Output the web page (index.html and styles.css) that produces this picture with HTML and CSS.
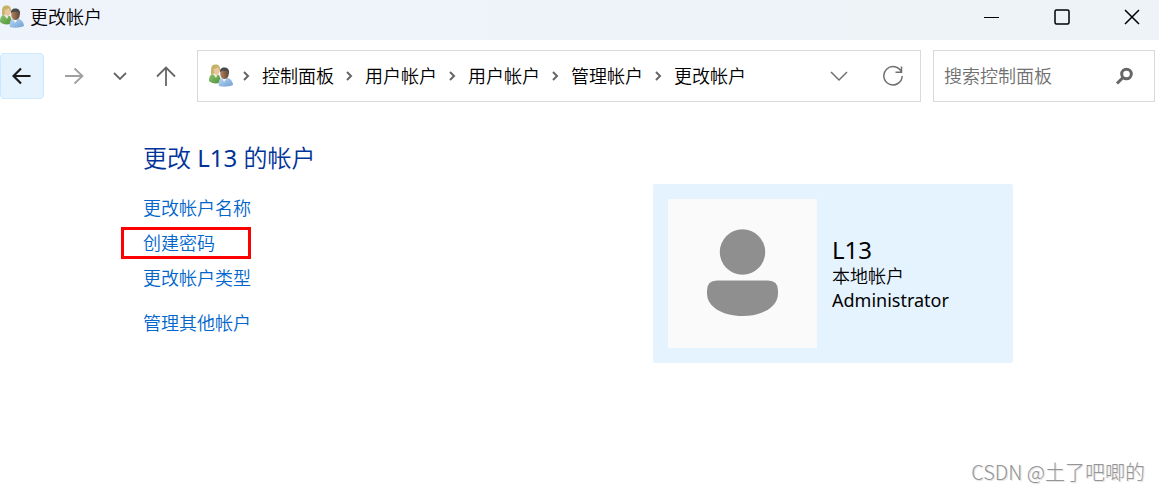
FILE: index.html
```html
<!DOCTYPE html>
<html lang="zh-CN">

<head>
    <meta charset="UTF-8">
    <meta name="viewport" content="width=device-width, initial-scale=1.0">
    <title>更改帐户</title>
    <link rel="stylesheet" href="styles.css">
</head>

<body>

    <!-- shared icon of two users -->
    <svg class="icon-defs" width="0" height="0" aria-hidden="true">
        <defs>
            <linearGradient id="green" x1="0" y1="0" x2="1" y2="1">
                <stop offset="0" stop-color="#8fc472" />
                <stop offset="1" stop-color="#4d9136" />
            </linearGradient>
            <linearGradient id="blue" x1="0" y1="0" x2="1" y2="1">
                <stop offset="0" stop-color="#b9d8f5" />
                <stop offset="1" stop-color="#6f9fd2" />
            </linearGradient>
            <linearGradient id="brown" x1="0" y1="0" x2="1" y2="0">
                <stop offset="0" stop-color="#b58460" />
                <stop offset="1" stop-color="#604636" />
            </linearGradient>
            <symbol id="users" viewBox="0 0 24 24">
                <path d="M0 17c0-4 1-6 3-7l7 1 2 5-2 3c-4 1-8 0-10-2z" fill="url(#green)" />
                <path d="M4 10l3 4 2-4z" fill="#f4ead8" />
                <path d="M2 9c0-5 0-8 4-8.500 4-.5 5 2 5 5.500l-1 3-8 1z" fill="#c5b268" />
                <path d="M4.500 5c2 0 3-1 4-2l2 3c0 3-1 5-3 5-2-1-3-3-3-6z" fill="#eac6a0" />
                <path d="M10 22c-1-4 0-7 3-8l6 0c3 1 5 4 5 7-4 2-11 2-14 1z" fill="url(#blue)" />
                <path d="M13 14l2 4 3-4z" fill="#edf6fd" />
                <ellipse cx="15.500" cy="9.500" rx="4.300" ry="5.500" fill="url(#brown)" />
                <path d="M11 8c0-3 1-4.500 4.500-4.500S20.500 6 20 10l-1.500-3c-3 0-5-1-7.500 1z" fill="#4a4a4c" />
            </symbol>
        </defs>
    </svg>

    <header class="titlebar">
        <svg class="app-icon" width="24" height="24" aria-hidden="true"><use href="#users" /></svg>
        <span class="titlebar-text">更改帐户</span>
        <div class="window-controls">
            <button class="window-btn" aria-label="最小化">
                <svg width="16" height="16" viewBox="0 0 16 16"><path d="M0 8.500H15" /></svg>
            </button>
            <button class="window-btn" aria-label="最大化">
                <svg width="16" height="16" viewBox="0 0 16 16"><rect class="thick" x="1" y="1" width="14" height="14" rx="1.500" /></svg>
            </button>
            <button class="window-btn" aria-label="关闭">
                <svg width="16" height="16" viewBox="0 0 16 16"><path class="thick" d="M1 1l14 14M15 1L1 15" /></svg>
            </button>
        </div>
    </header>

    <div class="toolbar">
        <nav class="nav-buttons">
            <button class="nav-btn back" aria-label="返回">
                <svg width="20" height="20" viewBox="0 0 20 20"><path d="M18.500 10H2M9 2.500L1.500 10 9 17.500" /></svg>
            </button>
            <button class="nav-btn forward" aria-label="前进">
                <svg width="20" height="20" viewBox="0 0 20 20"><path d="M1 10h17M10.500 2.500L18.500 10l-8 7.500" /></svg>
            </button>
            <button class="nav-btn recent" aria-label="最近浏览的位置">
                <svg width="14" height="14" viewBox="0 0 14 14"><path d="M1 4l6 6 6-6" /></svg>
            </button>
            <button class="nav-btn up" aria-label="上移">
                <svg width="20" height="20" viewBox="0 0 20 20"><path d="M10 20V1.500M1 10.500l9-9 9 9" /></svg>
            </button>
        </nav>

        <div class="address-bar">
            <svg class="address-icon" width="24" height="24" aria-hidden="true"><use href="#users" /></svg>
            <ol class="breadcrumb">
                <li><svg class="separator" width="7" height="10" viewBox="0 0 7 10"><path d="M1 1l4 4-4 4" /></svg><a href="#">控制面板</a></li>
                <li><svg class="separator" width="7" height="10" viewBox="0 0 7 10"><path d="M1 1l4 4-4 4" /></svg><a href="#">用户帐户</a></li>
                <li><svg class="separator" width="7" height="10" viewBox="0 0 7 10"><path d="M1 1l4 4-4 4" /></svg><a href="#">用户帐户</a></li>
                <li><svg class="separator" width="7" height="10" viewBox="0 0 7 10"><path d="M1 1l4 4-4 4" /></svg><a href="#">管理帐户</a></li>
                <li><svg class="separator" width="7" height="10" viewBox="0 0 7 10"><path d="M1 1l4 4-4 4" /></svg><a href="#">更改帐户</a></li>
            </ol>
            <button class="address-btn" aria-label="以前的位置">
                <svg width="18" height="18" viewBox="0 0 18 18"><path d="M1 5l8 8 8-8" /></svg>
            </button>
            <button class="address-btn" aria-label="刷新">
                <svg width="22" height="22" viewBox="0 0 22 22"><path d="M19.500 7.200A9.200 9.200 0 1 0 20.200 11M19.500 1.500v5.700h-6" /></svg>
            </button>
        </div>

        <form class="search">
            <input class="search-input" type="text" placeholder="搜索控制面板" aria-label="搜索控制面板">
            <button class="search-btn" type="button" aria-label="搜索">
                <svg width="18" height="18" viewBox="0 0 18 18"><circle cx="11.500" cy="7" r="4.800" /><path d="M8 10.500L2 16.500" /></svg>
            </button>
        </form>
    </div>

    <main class="content">
        <section class="tasks">
            <h1>更改 <span class="latin">L13</span> 的帐户</h1>
            <ul class="task-list">
                <li><a href="#">更改帐户名称</a></li>
                <li class="highlight"><a href="#">创建密码</a></li>
                <li><a href="#">更改帐户类型</a></li>
                <li class="other"><a href="#">管理其他帐户</a></li>
            </ul>
        </section>

        <section class="account-card">
            <div class="avatar">
                <svg width="149" height="149" viewBox="0 0 149 149" aria-hidden="true">
                    <circle cx="74.500" cy="53" r="22.700" />
                    <path d="M49 81.500h51q10 0 10 10v3c0 13-15 22.500-35.500 22.500S39 107.500 39 94.500v-3q0-10 10-10z" />
                </svg>
            </div>
            <div class="account-info">
                <h2 class="latin">L13</h2>
                <p>本地帐户</p>
                <p class="latin">Administrator</p>
            </div>
        </section>
    </main>

    <footer class="watermark">CSDN @土了吧唧的</footer>

</body>

</html>
```
FILE: styles.css
```css
* {
    box-sizing: border-box;
}

body {
    display: flex;
    flex-direction: column;
    min-height: 100vh;
    margin: 0;
    background-color: #fff;
    color: #000;
    font-family: "Noto Sans", "Noto Sans CJK SC", sans-serif;
    font-size: 18px;
    font-weight: 350;
    line-height: 24px;
}

button {
    display: flex;
    align-items: center;
    justify-content: center;
    padding: 0;
    border: none;
    background: none;
    cursor: pointer;
}

svg {
    display: block;
    flex-shrink: 0;
}

button svg,
.separator {
    fill: none;
    stroke: currentColor;
}

a {
    text-decoration: none;
}

h1,
h2,
p {
    margin: 0;
    font-weight: inherit;
}

ol,
ul {
    margin: 0;
    padding: 0;
    list-style: none;
}

.latin {
    font-weight: 400;
}

.icon-defs {
    position: absolute;
}

/* Title bar */
.titlebar {
    display: flex;
    align-items: center;
    height: 40px;
    padding-bottom: 6px;
    background: linear-gradient(to right, #eff3fb, #eef3f7);
}

.titlebar-text {
    margin-left: 6px;
}

.window-controls {
    display: flex;
    gap: 16px;
    margin-left: auto;
}

.window-btn {
    width: 54px;
    height: 34px;
    color: #000;
}

.window-btn .thick {
    stroke-width: 1.5;
}

/* Toolbar */
.toolbar {
    display: flex;
    align-items: center;
    padding: 10px 4px 10px 0;
}

.nav-buttons {
    display: flex;
    gap: 2px;
    margin-right: 9px;
}

.nav-btn {
    width: 44px;
    height: 46px;
    color: #666;
    stroke-width: 1.8;
}

.nav-btn.back {
    margin-right: 6px;
    border: 1px solid #cce8ff;
    border-radius: 4px;
    background-color: #e5f3ff;
    color: #1a1a1a;
    stroke-width: 2.2;
}

.nav-btn.forward {
    color: #a0a0a0;
}

.address-bar {
    display: flex;
    flex: 1;
    align-items: center;
    height: 52px;
    padding-left: 11px;
    border: 1px solid #d9d9d9;
}

.address-icon {
    margin-right: 10px;
}

.breadcrumb {
    display: flex;
    flex: 1;
    gap: 12px;
    white-space: nowrap;
}

.breadcrumb li {
    display: flex;
    align-items: center;
    gap: 12px;
}

.breadcrumb a {
    color: #000;
}

.separator {
    color: #666;
    stroke-width: 2;
}

.address-btn {
    width: 54px;
    height: 50px;
    color: #707070;
    stroke-width: 1.5;
}

.search {
    display: flex;
    align-items: center;
    width: 222px;
    height: 52px;
    margin-left: 12px;
    border: 1px solid #d9d9d9;
}

.search-input {
    flex: 1;
    min-width: 0;
    padding: 0 0 0 10px;
    border: none;
    outline: none;
    background: none;
    font: inherit;
}

.search-input::placeholder {
    color: #707070;
    opacity: 1;
}

.search-btn {
    width: 60px;
    height: 50px;
    color: #666;
    stroke-width: 3;
}

/* Content */
.content {
    display: flex;
    justify-content: space-between;
    padding: 30px 146px 0 143px;
}

h1 {
    margin-bottom: 18px;
    color: #003399;
    font-size: 24px;
    line-height: 32px;
}

.task-list {
    display: flex;
    flex-direction: column;
    align-items: flex-start;
    gap: 3px;
}

.task-list li {
    padding: 4px 0;
}

.task-list a {
    color: #0066cc;
}

.task-list .highlight {
    width: 130px;
    margin-left: -22px;
    padding: 1px 19px;
    border: 3px solid #f00;
}

.task-list .other {
    margin-top: 10px;
}

.account-card {
    display: flex;
    align-items: center;
    width: 360px;
    margin-top: 42px;
    padding: 15px;
    border-radius: 2px;
    background-color: #e5f3ff;
}

.avatar {
    margin-right: 15px;
    background-color: #fafafa;
    fill: #8f8f8f;
}

h2 {
    font-size: 24px;
    line-height: 28px;
}

/* Watermark */
.watermark {
    margin-top: auto;
    padding: 0 14px 8px 0;
    color: #959595;
    font-family: "Noto Sans CJK SC", sans-serif;
    font-size: 20px;
    font-weight: 300;
    text-align: right;
    text-shadow: 1px 1px 1px #ddd;
}
```
